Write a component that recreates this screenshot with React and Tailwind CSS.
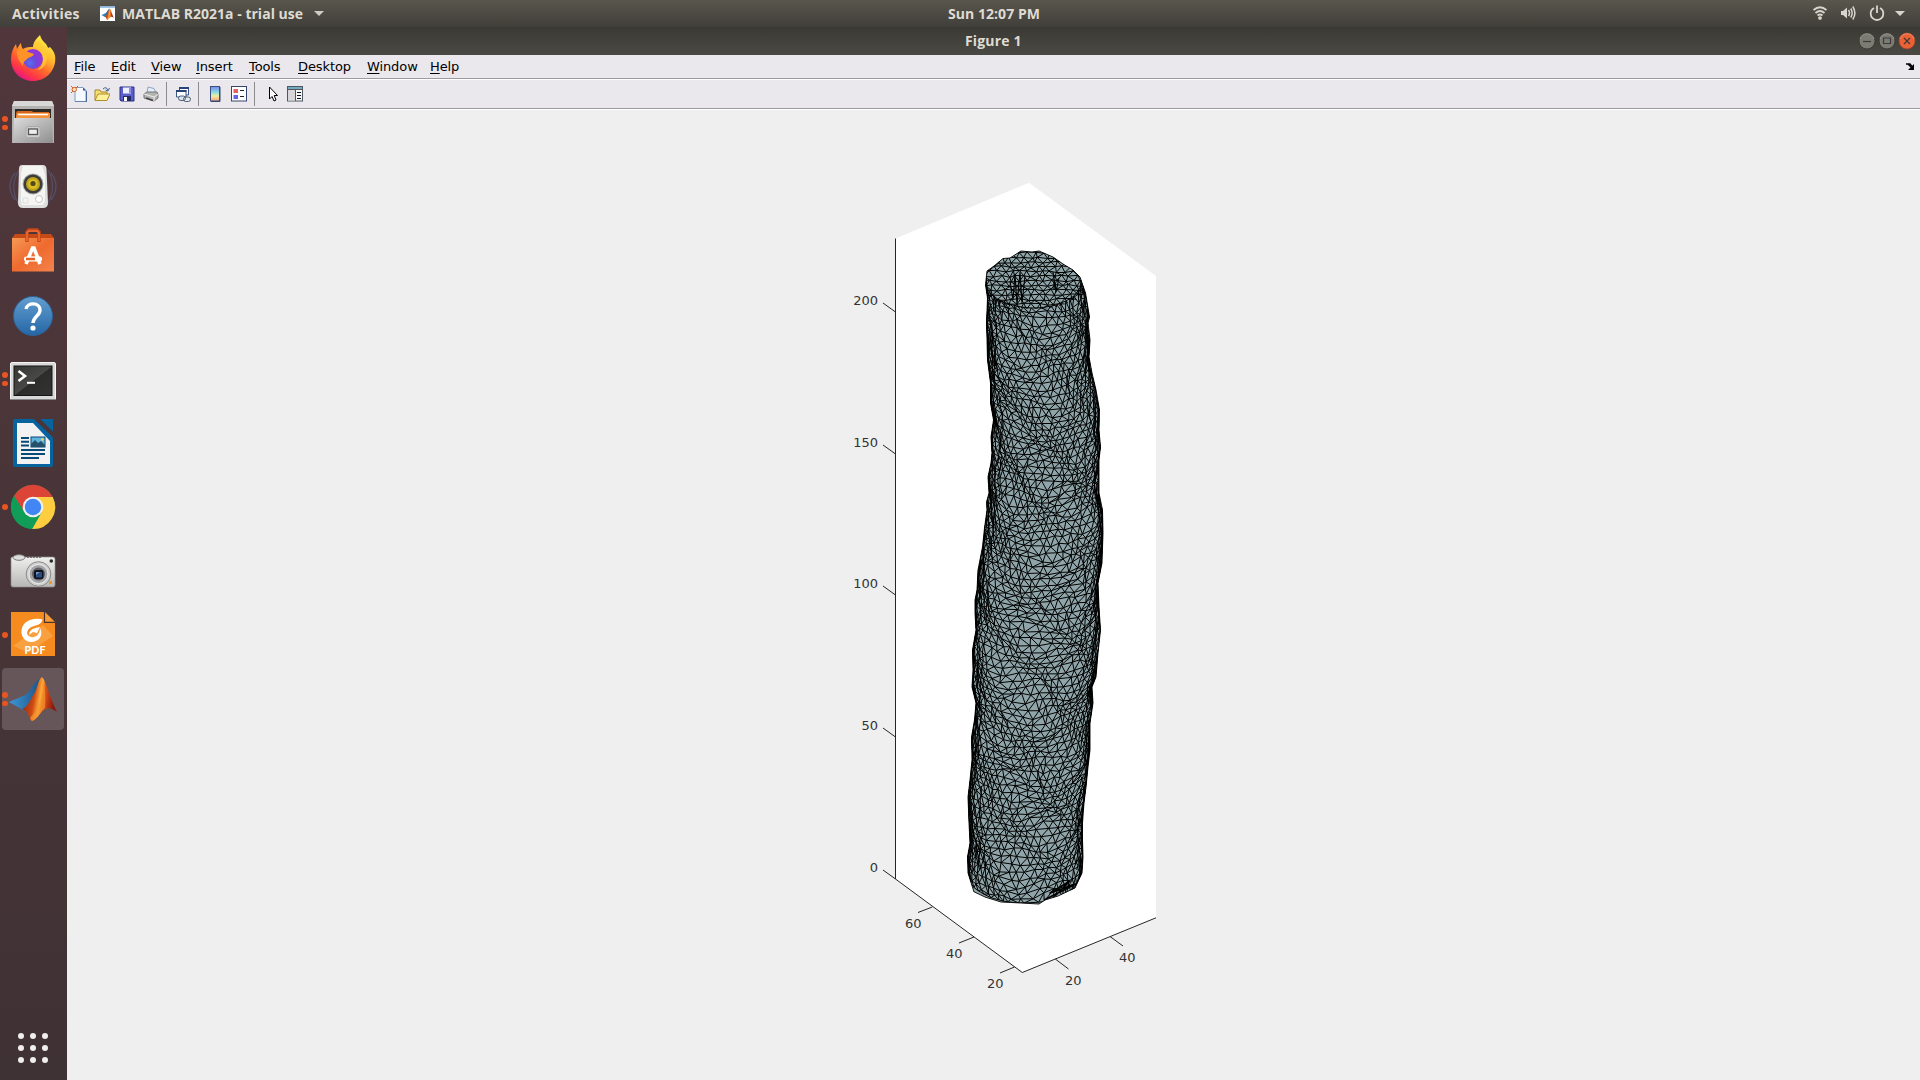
import React from "react";

const LEFT = [[271,987],[285,985.5],[298,987.5],[323,986.5],[340,987],[360,987.5],[383,990.5],[403,990.5],[420,993.5],[437,991],[453,992],[463,991],[477,988],[493,989],[502,986.5],[510,987],[528,984.5],[547,982.5],[570,978],[590,977],[600,975],[613,975],[630,976],[650,972.5],[670,973],[687,972],[703,976],[720,974.5],[737,971.5],[760,972],[780,970],[797,968],[823,969],[843,970],[857,967.5],[873,968],[892,974]];
const RIGHT = [[271,1078],[277,1080],[293,1085.5],[317,1089.5],[323,1088],[340,1090],[357,1089],[373,1092],[390,1096],[410,1099.5],[430,1099],[447,1100.5],[460,1099],[493,1099],[510,1102.5],[533,1103],[563,1102],[583,1098],[607,1099],[630,1100.5],[653,1098],[677,1096],[687,1092],[703,1093],[723,1090],[750,1090],[767,1088],[787,1086],[803,1084],[823,1082.5],[840,1082.5],[857,1083],[873,1082],[888,1075]];
const TOP = [[987,271],[994,266],[1003,258.5],[1010,258],[1021,251],[1032,252],[1039,251],[1053,257],[1063,264],[1073,270],[1080,277]];
const BOTTOM = [[1075,888],[1058,896],[1045,900],[1039,904],[1021,903],[1001,902],[985,897],[974.5,892]];

function lookup(table, y) {
  if (y <= table[0][0]) return table[0][1];
  for (let i = 1; i < table.length; i++) {
    if (y <= table[i][0]) {
      const [y0, x0] = table[i - 1];
      const [y1, x1] = table[i];
      return x0 + ((x1 - x0) * (y - y0)) / (y1 - y0);
    }
  }
  return table[table.length - 1][1];
}

function makeRandom(seed) {
  let s = seed;
  return () => {
    s = (s * 1664525 + 1013904223) >>> 0;
    return s / 4294967296 - 0.5;
  };
}

function linkRows(rows) {
  let d = "";
  const f = (p) => p[0].toFixed(1) + " " + p[1].toFixed(1);
  rows.forEach((row, r) => {
    d += "M" + row.map(f).join("L");
    if (r === 0) return;
    const up = rows[r - 1];
    for (let c = 0; c < row.length; c++) {
      const first = r % 2 ? up[c] : row[c];
      const second = r % 2 ? row[c] : up[c];
      d += (c ? "L" : "M") + f(first) + "L" + f(second);
    }
  });
  return d;
}

function wallMesh() {
  const rnd = makeRandom(77);
  const rows = [];
  const count = 95;
  const cols = 22;
  for (let r = 0; r <= count; r++) {
    const z = 281 + (r * (876 - 281)) / count;
    const row = [];
    for (let c = -1; c <= cols; c++) {
      const t = (c + (r % 2 ? 0.5 : 0) + rnd() * 0.55) / cols;
      let a = (t * 2 - 1) * (Math.PI / 2);
      a += 0.05 * Math.sin(z / 47 + a * 2) + 0.05 * Math.sin(z / 13 - a * 5);
      a = Math.max(-1.75, Math.min(1.75, a));
      const l = lookup(LEFT, z);
      const g = lookup(RIGHT, z);
      const end = r === 0 || r === count;
      const x = (l + g) / 2 + ((g - l) / 2) * Math.sin(a) + rnd() * 1.4;
      const wave = 2.2 * Math.sin(z / 27 - a * 2) * Math.cos(a) + 1.6 * Math.sin(z / 12 + a * 3) + 1.4 * Math.sin(z / 9 - a * 6);
      const y = z + 27 * Math.cos(a) + (end ? 0 : rnd() * 3.4 + wave);
      row.push([x, y]);
    }
    rows.push(row);
  }
  return linkRows(rows);
}

function rimMesh() {
  const rnd = makeRandom(12);
  const rows = [];
  for (let r = 0; r < 14; r++) {
    const row = [];
    for (let c = 0; c < 16; c++) {
      row.push([978 + (c + (r % 2 ? 0.5 : 0)) * 7.6 + rnd() * 3.4, 248 + r * 4.7 + rnd() * 2.4]);
    }
    rows.push(row);
  }
  return linkRows(rows);
}

function foldLines() {
  const rnd = makeRandom(5);
  let d = "";
  for (let k = 0; k < 7; k++) {
    const left = k < 4;
    const off = left ? 1 + k * 3.2 : -1 - (k - 4) * 1.8;
    let open = false;
    for (let y = 300; y < 872; y += 6) {
      const x = lookup(left ? LEFT : RIGHT, y) + off + rnd() * 2.4 + (left ? 1.5 * Math.sin(y / 40) : 0);
      const show = Math.sin(y / 31 + k * 2) > -0.2;
      if (show) d += (open ? "L" : "M") + x.toFixed(1) + " " + y;
      open = show;
    }
  }
  return d;
}

const OUTLINE =
  "M" + [...TOP, ...RIGHT.slice(2).map(([y, x]) => [x, y]), ...BOTTOM, ...LEFT.slice().reverse().map(([y, x]) => [x, y])].map((p) => p.join(" ")).join("L") + "Z";
const WALL = wallMesh();
const RIM = rimMesh();
const FOLDS = foldLines();

const Z_TICKS = [["200", 312], ["150", 454], ["100", 595], ["50", 737], ["0", 879]];
const FLOOR_LABELS = [["60", 905, 928], ["40", 946, 958], ["20", 987, 988], ["20", 1065, 985], ["40", 1119, 962]];

function Plot() {
  return (
    <svg className="h-[900px] w-[400px]" viewBox="800 120 400 900">
      <defs>
        <clipPath id="tube"><path d={OUTLINE} /></clipPath>
        <clipPath id="rim"><path d="M980 240H1090V281A54 27.500 0 0 1 980 281Z" /></clipPath>
      </defs>
      <path d="M1029 182.7L1156 276V918L1022.3 972.5L895.5 879V238.5Z" fill="#fff" />
      <g fill="none" stroke="#262626" strokeWidth="1">
        <path d="M895.5 238.5V879L1022.3 972.5L1156 917.8" />
        {Z_TICKS.map(([t, y]) => <path key={t} d={`M883 ${y - 9}L895.5 ${y}`} />)}
        <path d="M932.3 907L918 912.5M974 937L959 943M1014.5 967L1000 973M1055.3 959L1068.5 969M1110 936.5L1123 946" />
      </g>
      <g fill="#333" fontFamily='"DejaVu Sans", sans-serif' fontSize="13">
        {Z_TICKS.map(([t, y]) => <text key={t} x="878" y={y - 7} textAnchor="end">{t}</text>)}
        {FLOOR_LABELS.map(([t, x, y]) => <text key={x} x={x} y={y}>{t}</text>)}
      </g>
      <path d={OUTLINE} fill="#8fa5a9" />
      <g clipPath="url(#tube)" fill="none" stroke="#000" strokeLinejoin="round">
        <path d={WALL} strokeWidth="1" />
        <path d={RIM} strokeWidth="1" clipPath="url(#rim)" />
        <path d={FOLDS} strokeWidth="1" />
        <path d="M1010 281L1013 300L1015 274L1017 305L1020 272L1022 303L1025 276M1053 272L1056 292L1059 278M1054 275V290" strokeWidth="1.100" />
        <path d="M1044 900L1076 884L1050 893L1070 881L1055 896" strokeWidth="1.600" />
      </g>
      <path d={OUTLINE} fill="none" stroke="#000" strokeWidth=".9" />
    </svg>
  );
}

const ICON = "block h-12 w-12 overflow-visible";

const Firefox = () => (
  <svg className={ICON} viewBox="0 0 48 48">
    <defs>
      <linearGradient id="fx" x1="0.85" y1="0.1" x2="0.3" y2="1"><stop offset="0" stopColor="#fff24a" /><stop offset=".35" stopColor="#ffb62c" /><stop offset=".6" stopColor="#ff6a2c" /><stop offset=".82" stopColor="#ff3647" /><stop offset="1" stopColor="#e31587" /></linearGradient>
      <radialGradient id="fxg" cx=".35" cy=".7"><stop offset="0" stopColor="#5b6df0" /><stop offset=".6" stopColor="#6a4ad8" /><stop offset="1" stopColor="#9037d8" /></radialGradient>
    </defs>
    <path d="M31 0C32 4 34 6 37 9C38 11 39 12 39 13L41 12C45 16 46.500 20 46.300 24C46 37 36 46 24 46C11 46 2 36 2 24C2 18 4 13 7 9L8 14C9 12 11 9 12 8C12 11 13 13 14 14C17 12 21 12 24 12C24 7 28 3 31 0Z" fill="url(#fx)" />
    <circle cx="24" cy="24" r="10" fill="url(#fxg)" />
    <path d="M24 12C30 13 34 17 34 24C34 30 31 33 28 35C37 34 40 24 36 16C34 11 31 9 30 6C27 8 25 10 24 12Z" fill="#ffcb35" opacity=".8" />
    <path d="M8 15C12 13 17 15 19 17L25 19C24 22 20 22 18 24C16 26 14 27 14 31C11 27 7 22 8 15Z" fill="#ff9327" />
  </svg>
);

const Files = () => (
  <svg className={ICON} viewBox="0 0 48 48">
    <defs><linearGradient id="fl" x1="0" y1="0" x2="1" y2="1"><stop offset="0" stopColor="#ddd" /><stop offset=".5" stopColor="#b5b5b5" /><stop offset="1" stopColor="#8e8e8e" /></linearGradient></defs>
    <path d="M5 2H43L45 7V44H3V7Z" fill="#b2b2b0" /><path d="M5 2H43L45 7H3Z" fill="#d8d8d6" />
    <rect x="6" y="10" width="36" height="10" fill="#2d2925" />
    <path d="M8 12h15l1 1h16v7H7v-6z" fill="#d26518" /><path d="M8 14H41V20H7Z" fill="#f5913b" /><path d="M9 15.500H39" stroke="#fff" strokeWidth="1.500" />
    <path d="M5 19H43L44 44H4Z" fill="url(#fl)" />
    <rect x="17" y="27.500" width="14" height="11" rx="2" fill="#cfcfcf" stroke="#aaa" /><rect x="19.500" y="30" width="9" height="5.500" fill="#eee" stroke="#555" strokeWidth="1.300" />
  </svg>
);

const Rhythm = () => (
  <svg className={ICON} viewBox="0 0 48 48">
    <g fill="none" stroke="#5d668b" strokeWidth="1.300" opacity=".7"><path d="M6 10Q-4 23 6 37M10 7Q0 23 9 40" opacity=".75" /><path d="M42 10Q52 23 42 37M39 7Q48 23 39 40" opacity=".75" /></g>
    <path d="M13 2H34Q37 2 37.500 6L39 40Q39 45 34 45H14Q9 45 9 40L10 6Q10 2 13 2Z" fill="#dededc" /><path d="M14 3H33L36 12V38L34 42H13L12 38V10Z" fill="#f5f5f3" />
    <circle cx="24" cy="21" r="10.500" fill="#aaa" /><circle cx="24" cy="21" r="9.500" fill="#3b3b3a" /><circle cx="24" cy="21" r="7" fill="#c1a318" /><circle cx="24" cy="21" r="4.800" fill="#d8c02b" /><circle cx="24" cy="20.500" r="2.600" fill="#554b19" />
    <circle cx="30" cy="36" r="3.500" fill="#fff" stroke="#c6c6c4" /><path d="M14 35h5v5h-5z" fill="none" stroke="#ddd" />
  </svg>
);

const Software = () => (
  <svg className={ICON} viewBox="0 0 48 48">
    <defs><linearGradient id="sw" x1="0" y1="0" x2="1" y2="1"><stop offset="0" stopColor="#f59a55" /><stop offset=".5" stopColor="#ef6a2f" /><stop offset="1" stopColor="#f3844b" /></linearGradient></defs>
    <path d="M3 11L6 7H42L45 11V15H3Z" fill="#c44a16" /><path d="M3 11H45V44.500H3Z" fill="url(#sw)" />
    <path d="M18 15V5L20 3H28L30 5V15" fill="none" stroke="#c94716" strokeWidth="3.500" /><path d="M18 14V5.500L20 4H28L30 5.500V14" fill="none" stroke="#f1723b" strokeWidth="1.400" />
    <path d="M17 37L23.500 21H25L31 37M18 31.500H31" fill="none" stroke="#fff" strokeWidth="3.600" /><rect x="15" y="29.500" width="18" height="5" rx="2" fill="#fff" /><path d="M17 32H26" stroke="#e66329" strokeWidth="2.500" />
  </svg>
);

const Help = () => (
  <svg className={ICON} viewBox="0 0 48 48">
    <defs><linearGradient id="hp" x1="0" y1="0" x2="0" y2="1"><stop offset="0" stopColor="#639ed0" /><stop offset="1" stopColor="#2466a5" /></linearGradient></defs>
    <circle cx="24" cy="25" r="19.500" fill="url(#hp)" stroke="#2d6299" />
    <path d="M17 18C18 11 31 11 31 19C31 25 24.500 25 24 32" fill="none" stroke="#fff" strokeWidth="3.400" /><circle cx="24" cy="37" r="2.600" fill="#fff" />
  </svg>
);

const Terminal = () => (
  <svg className={ICON} viewBox="0 0 48 48">
    <defs><linearGradient id="tm" x1="0" y1="0" x2="1" y2="1"><stop offset="0" stopColor="#353535" /><stop offset=".5" stopColor="#484846" /><stop offset=".51" stopColor="#2c2c2b" /><stop offset="1" stopColor="#333" /></linearGradient></defs>
    <rect x="1.500" y="7.500" width="45" height="37" rx="1.500" fill="#d8d8d8" stroke="#f4f4f4" /><path d="M1 44.500H47" stroke="#888" /><rect x="5" y="11" width="38" height="29.500" fill="url(#tm)" stroke="#151515" />
    <path d="M9.500 16L16 21L9.500 26" fill="none" stroke="#fff" strokeWidth="2.600" /><path d="M18 27.800H26" stroke="#fff" strokeWidth="2" />
  </svg>
);

const Writer = () => (
  <svg className={ICON} viewBox="0 0 48 48">
    <path d="M6 0H25L44 18V46Q44 48 42 48H6Q4 48 4 46V2Q4 0 6 0Z" fill="#07639e" /><path d="M8 4H24L41 22V45H8Z" fill="#f2f2f2" /><path d="M31 0H44V13Z" fill="#07639e" stroke="#4a343a" strokeWidth="0" />
    <path d="M25 0H31L44 13V18Z" fill="#4b353b" />
    <path d="M12 19H20M12 22.800H20M12 26.600H20M12 31H36M12 35H36M12 39H30" stroke="#064a78" strokeWidth="2" /><rect x="22" y="18" width="14" height="10" fill="#63b4dd" stroke="#064a78" /><path d="M22 28V25L26 21L29 24L32 22L36 26V28Z" fill="#23516b" /><circle cx="33.500" cy="20.500" r="1.300" fill="#f8d75d" />
  </svg>
);

const Chrome = () => (
  <svg className={ICON} viewBox="0 0 48 48">
    <circle cx="24" cy="24" r="22" fill="#0f9d58" />
    <path d="M24 14H43.700A22 22 0 0 0 4.900 12.900L15.300 29Z" fill="#db4437" /><path d="M32.700 29L23 46A22 22 0 0 0 43.700 14H24Z" fill="#ffcd40" />
    <path d="M15.300 29A10 10 0 0 0 32.700 29L23 46A22 22 0 0 1 4.900 12.900Z" fill="#0f9d58" /><circle cx="24" cy="24" r="10.300" fill="#f1f1f1" /><circle cx="24" cy="24" r="8.200" fill="#4285f4" />
  </svg>
);

const Camera = () => (
  <svg className={ICON} viewBox="0 0 48 48">
    <defs><linearGradient id="cm" x1="0" y1="0" x2="0" y2="1"><stop offset="0" stopColor="#efefed" /><stop offset="1" stopColor="#b7b7b5" /></linearGradient></defs>
    <path d="M3 10H44Q46 10 46 12V38Q46 40 44 40H4Q2 40 2 38V11Z" fill="url(#cm)" stroke="#8d8d8b" strokeWidth=".700" /><ellipse cx="10" cy="10.500" rx="6" ry="2.800" fill="#ddd" stroke="#777" /><path d="M18 10.500H33" stroke="#777" strokeDasharray="2 1" />
    <circle cx="29.500" cy="27" r="12.300" fill="#d1d1cf" stroke="#8a8a88" /><circle cx="29.500" cy="27" r="9.500" fill="#a3a5a8" stroke="#eee" /><circle cx="29.500" cy="27" r="6.500" fill="#5d6066" /><rect x="25" y="23" width="9.500" height="9" rx="2" fill="#101319" /><rect x="27" y="25" width="6" height="5.500" fill="#254c85" /><path d="M27 25h4l-4 3z" fill="#7592b5" /><circle cx="42.300" cy="14" r="1.800" fill="#292929" /><rect x="40" y="34" width="3" height="3" fill="#f29a25" />
  </svg>
);

const Foxit = () => (
  <svg className={ICON} viewBox="0 0 48 48">
    <path d="M2 1H35L46 12V45H2Z" fill="#f68b1f" /><path d="M4 35L34 14L44 25L28 36L20 42Z" fill="#fba94f" opacity=".7" /><path d="M36 1L46 11H36Z" fill="#f99c35" /><path d="M35.500 1V11.300H46" stroke="#4c342e" fill="none" strokeWidth="1.200" />
    <path d="M33.500 8.500Q28 7 21 9C9 13 10 30 22 31C30 31 35 24 31 17C31 24 26 27 22 26C16 25 17 17 25 15C30 14 33 12 33.500 8.500Z" fill="#fff" />
    <path d="M20 24Q20 17 31 16L28 22L24 21Z" fill="#fff" />
    <text x="15.500" y="43" fontFamily="Lato, sans-serif" fontWeight="900" fontSize="10.500" fill="#fff" textLength="21">PDF</text>
  </svg>
);

const MatlabShape = () => (
  <>
    <defs>
      <linearGradient id="ml" x1="0" y1="0" x2="1" y2=".2"><stop offset="0" stopColor="#7a1d12" /><stop offset=".42" stopColor="#d04a12" /><stop offset=".6" stopColor="#ffb23c" /><stop offset=".68" stopColor="#e0591b" /><stop offset="1" stopColor="#8a150c" /></linearGradient>
      <linearGradient id="mb" x1="0" y1="0" x2="1" y2="0"><stop offset="0" stopColor="#3d98d8" /><stop offset="1" stopColor="#1d4f80" /></linearGradient>
    </defs>
    <path d="M0 27L14 21Q18 20 21 15Q26 6 33 2L24 24L14 35Z" fill="url(#mb)" />
    <path d="M33 2C37 6 41 23 48 37C43 33 39 32 35 35C30 38 27 46 22 46C20 40 17 34 13 34C19 32 21 25 25 19C29 12 29 4 33 2Z" fill="url(#ml)" />
    <path d="M33 4C34 18 31 33 21 43L23 46C29 44 32 36 36 33C37 22 36 10 33 4Z" fill="#f6952e" opacity=".7" />
  </>
);

const Matlab = () => (
  <svg className={ICON} viewBox="0 0 48 48"><MatlabShape /></svg>
);

const DOCK = [
  [Firefox, 0], [Files, 2], [Rhythm, 0], [Software, 0], [Help, 0], [Terminal, 2],
  [Writer, 0], [Chrome, 1], [Camera, 0], [Foxit, 1], [Matlab, 2],
];

function Dock() {
  return (
    <aside className="flex w-[67px] shrink-0 flex-col bg-linear-to-b from-[#51373c] to-[#3f3234]">
      {DOCK.map(([Icon, dots], i) => (
        <div key={i} className="flex h-16 items-center pl-[2px]">
          <div className={i === 10 ? "flex h-[62px] w-[62px] items-center rounded bg-[#675659]" : "flex h-[62px] w-[62px] items-center"}>
            <div className="flex w-[7px] shrink-0 flex-col gap-[3px]">
              {Array.from({ length: dots }, (_, k) => <i key={k} className="h-[5.500px] w-[5.500px] rounded-full bg-[#e95420]" />)}
            </div>
            <Icon />
          </div>
        </div>
      ))}
      <div className="mt-auto mb-[17px] ml-[18px] grid w-[30px] grid-cols-3 gap-[6px]">
        {Array.from({ length: 9 }, (_, k) => <i key={k} className="h-[6px] w-[6px] rounded-full bg-[#f0eeee]" />)}
      </div>
    </aside>
  );
}

const MENU = [
  ["File", "w-[37px]"], ["Edit", "w-[40px]"], ["View", "w-[45px]"], ["Insert", "w-[53px]"],
  ["Tools", "w-[49px]"], ["Desktop", "w-[69px]"], ["Window", "w-[63px]"], ["Help", "w-[40px]"],
];

const Sep = ({ className }) => <div className={"h-6 w-px shrink-0 bg-[#8c8c8c] " + className} />;
const Tool = ({ className = "", children }) => <svg className={"h-4 w-4 shrink-0 " + className} viewBox="0 0 16 16">{children}</svg>;

function Toolbar() {
  return (
    <div className="flex h-[29px] items-center border-b border-[#9c9b9f] bg-[#eae8ed] pl-[3px]">
      <Tool className="ml-px">
        <path d="M4 1.500H12L15 4.500V15.500H4Z" fill="#f4faff" stroke="#7f9cc4" /><path d="M12 1.500V4.500H15Z" fill="#35528a" /><path d="M15.500 5V16H4" fill="none" stroke="#49699c" />
        <path d="M0 0L2 2M5 2L7 0M0 7L2 5" stroke="#d06033" /><circle cx="3.300" cy="3.500" r="2.200" fill="#fbe3b8" stroke="#dc5c28" />
      </Tool>
      <Tool className="ml-[7px]">
        <path d="M1 14V4H6L7 6H13V14Z" fill="#f5de72" stroke="#a5852b" /><path d="M1 14.500L4 8H16L13 14.500Z" fill="#fff09a" stroke="#b08e2c" /><path d="M9 3Q12 0 14 4M15.500 2L14 5L11.500 4" fill="none" stroke="#3e6488" />
      </Tool>
      <Tool className="ml-[9px]">
        <path d="M1 1H15V15H2L1 14Z" fill="#5a5fc9" stroke="#2b3187" /><rect x="4" y="1.500" width="8" height="6" fill="#eef0ff" /><path d="M11 2V7" stroke="#8a8fe0" strokeWidth="2" /><rect x="4" y="10" width="8" height="5" fill="#242a62" /><rect x="5" y="11" width="3" height="4" fill="#fff" />
      </Tool>
      <Tool className="ml-2">
        <path d="M4 7L5 1L11 2.500L13 7Z" fill="#e4edfb" stroke="#91a4c0" /><path d="M1 8L4 6H14L15 9V12L11 15L1 12Z" fill="#b4b4b2" stroke="#747474" /><path d="M1 8L11 11L15 8.500M11 11V15" fill="none" stroke="#eee" /><path d="M3 12L10 14.500" stroke="#444" strokeWidth="1.500" />
      </Tool>
      <Sep className="ml-[7px]" />
      <Tool className="ml-2">
        <path d="M4.500 1.500H13.500V9H4.500Z" fill="#fff" stroke="#3b5588" /><path d="M4 2H14" stroke="#28427a" strokeWidth="2" /><path d="M1.500 4.500H11V11H1.500Z" fill="#fff" stroke="#3b5588" /><path d="M1 5H11.500" stroke="#28427a" strokeWidth="2" />
        <rect x="3.500" y="10" width="7" height="4.500" rx="2.200" fill="#d9e3ed" stroke="#4b6075" /><rect x="8.500" y="11" width="7" height="4.500" rx="2.200" fill="none" stroke="#4b6075" />
      </Tool>
      <Sep className="ml-[7px]" />
      <Tool className="ml-2">
        <defs><linearGradient id="cb" x1="0" y1="0" x2="0" y2="1"><stop offset="0" stopColor="#7488eb" /><stop offset=".4" stopColor="#8bdbe6" /><stop offset=".65" stopColor="#efef9c" /><stop offset="1" stopColor="#f6a183" /></linearGradient></defs>
        <rect x="3.500" y=".5" width="9" height="14.500" fill="url(#cb)" stroke="#3c4f7c" /><path d="M13 1V15.500H4" fill="none" stroke="#344770" />
      </Tool>
      <Tool className="ml-2">
        <rect x=".5" y=".5" width="15" height="14.500" fill="#fff" stroke="#34466f" /><path d="M2.500 3H7V7H2.500Z" fill="#e8605f" /><path d="M2.500 9H7V13H2.500Z" fill="#6464e8" /><path d="M9 4.500H13M9 10.500H13" stroke="#222" />
      </Tool>
      <Sep className="ml-[7px]" />
      <Tool className="ml-[10px]">
        <path d="M4.500 1V13L7 10.500L9 15L11 14L9.200 9.500H12.500Z" fill="#fff" stroke="#000" />
      </Tool>
      <Tool className="ml-[6px]">
        <rect x=".5" y=".5" width="15" height="14.500" fill="#f7f7f7" stroke="#4e5860" /><path d="M1 2H15" stroke="#73aac4" strokeWidth="2" /><path d="M1 3.500H15M8.500 4V15" stroke="#555" /><path d="M1 4H8V14.500H1Z" fill="#d8d6d8" /><path d="M10 6.500H14M10 9.500H14M10 12.500H14" stroke="#111" />
      </Tool>
    </div>
  );
}

const WinButton = ({ close, children }) => (
  <svg className="h-[18px] w-[18px]" viewBox="0 0 18 18">
    <circle cx="9" cy="9" r="8" fill={close ? "#ea6136" : "#7b7a73"} stroke={close ? "#9e452b" : "#33322e"} strokeWidth=".8" />
    <path d="M2 7A7.300 7.300 0 0 1 16 7" fill="none" stroke={close ? "#f29a79" : "#a09e96"} strokeWidth=".8" />
    <g fill="none" stroke="#3c3b37" strokeWidth="1.200">{children}</g>
  </svg>
);

export default function App() {
  return (
    <div className="flex h-[1080px] w-[1920px] flex-col overflow-hidden bg-[#efefef]">
      <header className="grid h-[27px] shrink-0 grid-cols-[1fr_auto_1fr] items-center bg-linear-to-b from-[#59564d] to-[#413f3a] pb-px font-['Open_Sans',sans-serif] text-[14px] font-bold whitespace-nowrap text-[#dfdbd2]">
        <div className="flex items-center pl-3">
          <span className="w-[88px] tracking-[0.280px]">Activities</span>
          <svg className="h-[15px] w-[15px] bg-white" viewBox="-5 -8 58 58"><rect x="-5" y="-8" width="58" height="7" fill="#8cb5d8" /><MatlabShape /></svg>
          <span className="ml-[7px] w-[186px] tracking-[0.020px]">MATLAB R2021a - trial use</span>
          <svg className="ml-[6px] h-[5px] w-[10px]" viewBox="0 0 10 5"><path d="M0 0H10L5 5Z" fill="#cfccc4" /></svg>
        </div>
        <span className="w-[92px] translate-x-[34px] tracking-[0.050px]">Sun 12:07 PM</span>
        <div className="flex items-center justify-end pr-[15px]">
          <svg className="h-[16px] w-[16px]" viewBox="0 0 16 16" fill="none" stroke="#d8d5cd" strokeWidth="1.700"><path d="M1.500 5Q8 -.5 14.500 5M3.500 8Q8 4 12.500 8M5.500 10.500Q8 8.500 10.500 10.500" /><circle cx="8" cy="13" r="1.300" fill="#d8d5cd" stroke="none" /><circle cx="8" cy="13" r="1" /></svg>
          <svg className="ml-3 h-4 w-4" viewBox="0 0 16 16" fill="none" stroke="#d8d5cd" strokeWidth="1.500"><path d="M1 6H3L7 2.500V13.500L3 10H1Z" fill="#d8d5cd" stroke="none" /><path d="M8.500 5Q10.500 8 8.500 11M10.800 3.500Q13.500 8 10.800 12.500M12.800 1.500Q17 8 12.800 14.500" /></svg>
          <svg className="ml-[13px] h-4 w-4" viewBox="0 0 16 16" fill="none" stroke="#d8d5cd" strokeWidth="1.800"><path d="M5 3Q1.500 5 1.700 8.700A6.300 6.300 0 0 0 14.300 8.700Q14.500 5 11 3M8 .5V8" /></svg>
          <svg className="ml-[10px] h-[5px] w-[10px]" viewBox="0 0 10 5"><path d="M0 0H10L5 5Z" fill="#d8d5cd" /></svg>
        </div>
      </header>
      <div className="flex min-h-0 grow">
        <Dock />
        <main className="flex min-w-0 grow flex-col">
          <div className="grid h-[28px] shrink-0 grid-cols-[1fr_auto_1fr] items-center bg-linear-to-b from-[#3a3934] to-[#4a4943] pb-px font-['Open_Sans',sans-serif] text-[14px] font-bold text-[#dfdbd2]">
            <span />
            <span className="w-[57px] tracking-[0.150px] whitespace-nowrap">Figure 1</span>
            <div className="flex justify-end gap-[2px] pr-1">
              <WinButton><path d="M5 9.500H13" /></WinButton>
              <WinButton><path d="M5.500 6H12.500V11.500H5.500Z" /></WinButton>
              <WinButton close><path d="M6 6L12 12M12 6L6 12" /></WinButton>
            </div>
          </div>
          <nav className="flex h-[25px] shrink-0 items-start border-b border-white bg-[#eae8ed] font-['DejaVu_Sans',sans-serif] text-[13px] leading-6 text-black">
            <div className="flex h-6 grow border-b border-[#9c9b9f] pl-[7px] tracking-[-0.100px]">
              {MENU.map(([name, width]) => (
                <span key={name} className={width}><span className="underline underline-offset-2">{name[0]}</span>{name.slice(1)}</span>
              ))}
              <svg className="mt-2 mr-[6px] ml-auto h-[7px] w-[8px]" viewBox="0 0 8 7"><path d="M0 1H4L6 3.500M2 1L6 5" stroke="#000" strokeWidth="1.500" fill="none" /><path d="M8 1V7H2Z" fill="#000" /></svg>
            </div>
          </nav>
          <Toolbar />
          <section className="flex grow justify-start border-t border-white pt-[10px] pl-[733px]">
            <Plot />
          </section>
        </main>
      </div>
    </div>
  );
}
